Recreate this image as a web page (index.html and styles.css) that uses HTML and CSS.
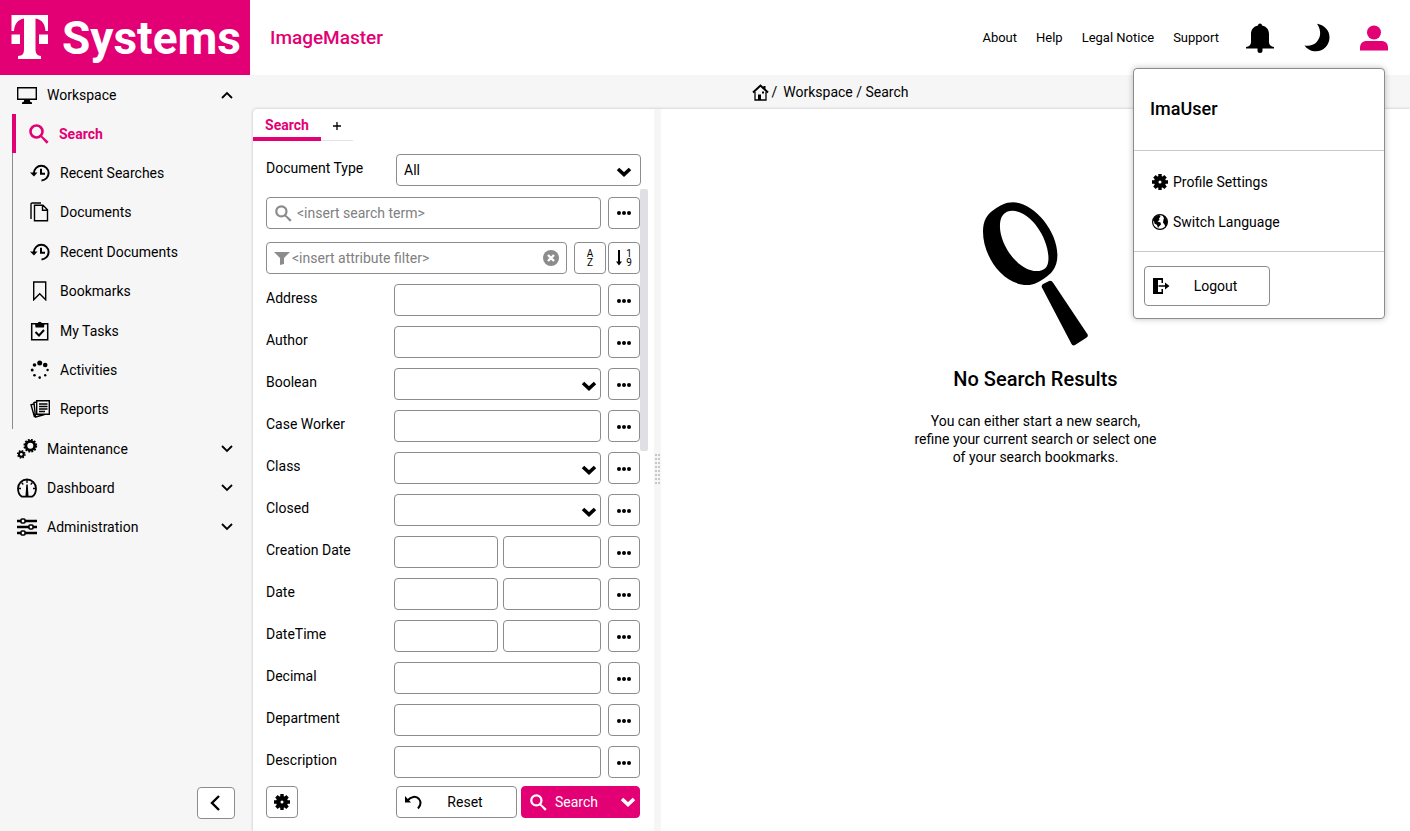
FILE: index.html
```html
<!DOCTYPE html>
<html lang="en">
<head>
    <meta charset="UTF-8">
    <meta name="viewport" content="width=device-width, initial-scale=1.0">
    <title>ImageMaster</title>
    <link rel="stylesheet" href="styles.css">
</head>
<body>
    <!-- shared icons -->
    <svg class="sprite" aria-hidden="true">
        <symbol id="i-search" viewBox="0 0 20 20"><circle cx="7.5" cy="7.5" r="6" fill="none" stroke="currentColor" stroke-width="2.6"/><path d="M11.5 11.5l1.5.2 6.6 6-2 2-6-6.600z" fill="currentColor"/></symbol>
        <symbol id="i-history" viewBox="0 0 20 18"><path d="M4 9a7.300 7.300 0 1 1 7.500 7.400" fill="none" stroke="currentColor" stroke-width="2"/><path d="M0 8.500h7.500L4 12.500zM10 4.800h2v4h3v2h-5z" fill="currentColor"/></symbol>
        <symbol id="i-dots" viewBox="0 0 14 4"><circle cx="2" cy="2" r="2"/><circle cx="7" cy="2" r="2"/><circle cx="12" cy="2" r="2"/></symbol>
        <symbol id="i-down" viewBox="0 0 16 10"><path d="M2 2l6 5.500L14 2" fill="none" stroke="currentColor" stroke-width="3.600"/></symbol>
        <symbol id="i-caret" viewBox="0 0 12 8"><path d="M1 1l5 5 5-5" fill="none" stroke="currentColor" stroke-width="1.800"/></symbol>
        <symbol id="i-gear" viewBox="0 0 16 16"><path d="M6.300 0h3.400v2.200l1 .4 1.600-1.500 2.500 2.500-1.500 1.600.4 1H16v3.600h-2.300l-.4 1 1.500 1.600-2.500 2.500-1.600-1.500-1 .4V16H6.300v-2.200l-1-.4-1.600 1.500-2.500-2.500 1.500-1.600-.4-1H0V6.200h2.300l.4-1-1.500-1.600 2.500-2.500 1.600 1.500 1-.4zM8 6.500a1.500 1.500 0 1 0 0 3 1.500 1.500 0 0 0 0-3z" fill-rule="evenodd"/></symbol>
    </svg>

    <header class="topbar">
        <div class="logo">
            <svg width="38" height="45" viewBox="11 16 38 45"><path d="M11.500 16H48v16h-2.500C45 25 42 20.500 35.500 19.500V50c0 5 2 6.500 5.500 7v3H18v-3c4.500-.5 6-2 6-7V19.500C18 20.500 14.500 25 14 32h-2.500zM11.500 35.500H20V45h-8.500zM39 35.500h9V45h-9z" fill="#fff"/></svg>
            <span>Systems</span>
        </div>
        <div class="product">ImageMaster</div>
        <nav class="top-links">
            <a href="#">About</a>
            <a href="#">Help</a>
            <a href="#">Legal Notice</a>
            <a href="#">Support</a>
        </nav>
        <div class="top-icons">
            <button aria-label="Notifications"><svg width="28" height="30" viewBox="0 0 28 30"><path d="M12 2.500a2 2 0 0 1 4 0c4.500 1 7 4 7 8.500v8c0 3 2 4.500 5 5v1.500H16.500V27.500a2.500 2.500 0 0 1-5 0v-2H0V24c3-.5 5-2 5-5v-8c0-4.500 2.500-7.500 7-8.500z"/></svg></button>
            <button aria-label="Dark mode"><svg width="28" height="30" viewBox="0 0 28 30"><path d="M14 .8c8 1.500 12.500 7 12.500 13.500 0 8-6 14-13.500 14C8 28.300 4 26 1.500 22.500c4.500 1 9-.2 12.200-3.500 4.300-4.600 4.900-11.500.3-18.200z"/></svg></button>
            <button class="active" aria-label="User"><svg width="28" height="26" viewBox="0 0 28 26"><circle cx="14" cy="7.500" r="7"/><path d="M0 25.500V23c0-4.500 2.500-7 7-7h14c4.500 0 7 2.500 7 7v2.500z"/></svg></button>
        </div>
    </header>

    <div class="user-menu">
        <h2>ImaUser</h2>
        <ul>
            <li><a href="#"><svg width="16" height="16"><use href="#i-gear"/></svg>Profile Settings</a></li>
            <li><a href="#"><svg width="16" height="16" viewBox="0 0 16 16"><circle cx="8" cy="8" r="7.400" fill="none" stroke="currentColor" stroke-width="1.200"/><path d="M.8 6.500L3 3l4-2.200L8.500 2.500 7 4.500 7.500 6 5.500 7.500l3 1 .5 2L7 12.500 6 14 5 11 2.500 9.500 2 7zM10.500 1l2.500 2 2.300 4-.2 3-1.600 3-1-2.500-1.500-2 .5-3L12 4.500z"/></svg>Switch Language</a></li>
        </ul>
        <div class="menu-foot">
            <button class="btn logout"><svg width="17" height="16" viewBox="0 0 17 16"><path d="M0 0h10v5H8.500V2H5v12h3.500v-3H10v5H0zM5.500 7.200H12V4.500l4.500 3.500L12 11.500V8.800H5.500z"/></svg><span>Logout</span></button>
        </div>
    </div>

    <div class="page">
        <aside class="sidebar">
            <nav>
                <a class="group" href="#"><svg width="22" height="18" viewBox="0 0 22 18"><path d="M1.700 1.700h18.600v11.600H1.700z" fill="none" stroke="currentColor" stroke-width="1.400"/><path d="M8 14h6v1.500l2 1V18H6v-1.500l2-1z"/></svg>Workspace<svg class="arrow up" width="12" height="8"><use href="#i-caret"/></svg></a>
                <ul>
                    <li class="current"><a href="#"><svg width="20" height="20"><use href="#i-search"/></svg>Search</a></li>
                    <li><a href="#"><svg width="20" height="18"><use href="#i-history"/></svg>Recent Searches</a></li>
                    <li><a href="#"><svg width="20" height="20" viewBox="0 0 20 20"><path d="M1 17V1.800L2 1h9M4.500 3.200H13l4.500 4.500v11.100h-13zM12.500 3.500v4.700h5" fill="none" stroke="currentColor" stroke-width="1.400"/></svg>Documents</a></li>
                    <li><a href="#"><svg width="20" height="18"><use href="#i-history"/></svg>Recent Documents</a></li>
                    <li><a href="#"><svg width="20" height="20" viewBox="0 0 20 20"><path d="M3.700 1h12v17.800l-6-6-6 6z" fill="none" stroke="currentColor" stroke-width="1.400"/></svg>Bookmarks</a></li>
                    <li><a href="#"><svg width="20" height="20" viewBox="0 0 20 20"><path d="M1.700 2.700h16v16h-16z" fill="none" stroke="currentColor" stroke-width="1.500"/><path d="M5 2.500h2.500a2.300 2.300 0 0 1 4.500 0h2.500L14 6.500H5.500z"/><path d="M5.500 11l3.500 3.500L14 9" fill="none" stroke="currentColor" stroke-width="2"/></svg>My Tasks</a></li>
                    <li><a href="#"><svg width="20" height="20" viewBox="0 0 20 20"><circle cx="9.700" cy="3" r="2.500"/><circle cx="15.200" cy="5" r="2.300"/><circle cx="4.500" cy="5" r="1.800"/><circle cx="2.200" cy="10" r="1.500"/><circle cx="17.600" cy="10" r="1.200"/><circle cx="4.500" cy="15.300" r="1.300"/><circle cx="15.200" cy="15.300" r="1.200"/><circle cx="9.700" cy="17.600" r="1.300"/></svg>Activities</a></li>
                    <li><a href="#"><svg width="20" height="20" viewBox="0 0 20 20"><path d="M6.700 1.700h12.600v13.600H6.700zM6.500 3L4 3.500 5.500 18l9-2.500M4 5L1 5.800 4.500 18" fill="none" stroke="currentColor" stroke-width="1.400"/><path d="M9 5h8.500M9 7.500h8.500M9 10h8.500M9 12.500h6" stroke="currentColor" stroke-width="1.300"/></svg>Reports</a></li>
                </ul>
                <a class="group" href="#"><svg width="22" height="20" viewBox="0 0 22 20"><circle cx="14.300" cy="6.700" r="4.400" fill="none" stroke="currentColor" stroke-width="2.800"/><circle cx="14.300" cy="6.700" r="6" fill="none" stroke="currentColor" stroke-width="1.800" stroke-dasharray="1.800 1.340"/><circle cx="5.300" cy="15.300" r="2.400" fill="none" stroke="currentColor" stroke-width="2"/><circle cx="5.300" cy="15.300" r="3.700" fill="none" stroke="currentColor" stroke-width="1.400" stroke-dasharray="1.500 1.400"/></svg>Maintenance<svg class="arrow" width="12" height="8"><use href="#i-caret"/></svg></a>
                <a class="group" href="#"><svg width="22" height="20" viewBox="0 0 22 20"><path d="M6 18.700C3 17 2 14 2 10.500a9 9 0 0 1 18 0c0 3.500-1 6.500-4 8.200z" fill="none" stroke="currentColor" stroke-width="1.800"/><path d="M11 2v3M5.500 4.500l1.800 2M16.500 4.500l-1.800 2M2.500 10.500H5M17 10.500h2.500" stroke="currentColor" stroke-width="1.300"/><path d="M10.300 6.500h1.400l.8 11.500h-3z"/></svg>Dashboard<svg class="arrow" width="12" height="8"><use href="#i-caret"/></svg></a>
                <a class="group" href="#"><svg width="22" height="18" viewBox="0 0 22 18"><path d="M1 3h20M1 9h20M1 15h20" stroke="currentColor" stroke-width="2.400"/><g fill="#fff" stroke="currentColor" stroke-width="1.600"><rect x="5" y="1" width="4" height="4" rx="1"/><rect x="13" y="7" width="4" height="4" rx="1"/><rect x="5" y="13" width="4" height="4" rx="1"/></g></svg>Administration<svg class="arrow" width="12" height="8"><use href="#i-caret"/></svg></a>
            </nav>
            <button class="btn collapse" aria-label="Collapse sidebar"><svg width="12" height="18" viewBox="0 0 12 18"><path d="M9 2L2 9l7 7" fill="none" stroke="currentColor" stroke-width="2.400"/></svg></button>
        </aside>

        <main>
            <div class="breadcrumb">
                <svg width="17" height="17" viewBox="0 0 17 17"><path d="M1 8.500l7.500-7 7.500 7M12.500 2v3" fill="none" stroke="currentColor" stroke-width="2"/><path d="M3 8v8h11V8" fill="none" stroke="currentColor" stroke-width="1.300"/><path d="M6 10.500h3V16H6zM10 7.500h2v2h-2z"/></svg>
                <span>/</span>
                <a href="#">Workspace / Search</a>
            </div>
            <div class="content">
                <section class="search-panel">
                    <div class="tabs">
                        <button class="tab selected">Search</button>
                        <button class="tab add" aria-label="New tab"><svg width="8" height="8" viewBox="0 0 8 8"><path d="M4 0v8M0 4h8" stroke="currentColor" stroke-width="1.300"/></svg></button>
                    </div>
                    <form>
                        <div class="doc-type">
                            <label for="docType">Document Type</label>
                            <div class="select"><select id="docType"><option>All</option></select><svg width="16" height="10"><use href="#i-down"/></svg></div>
                        </div>
                        <div class="scroll-area">
                            <div class="tool-row">
                                <div class="box search-box"><svg width="17" height="17"><use href="#i-search"/></svg><input type="text" placeholder="&lt;insert search term&gt;" aria-label="Search term"></div>
                                <button type="button" class="btn square" aria-label="More"><svg width="14" height="4"><use href="#i-dots"/></svg></button>
                            </div>
                            <div class="tool-row filter-row">
                                <div class="box filter-box"><svg width="16" height="13" viewBox="0 0 16 13"><path d="M0 0h16l-6 6v6l-4 1V6z"/></svg><input type="text" placeholder="&lt;insert attribute filter&gt;" aria-label="Attribute filter"><button type="button" aria-label="Clear"><svg width="16" height="16" viewBox="0 0 16 16"><circle cx="8" cy="8" r="8"/><path d="M5 5l6 6M11 5l-6 6" stroke="#fff" stroke-width="2.400"/></svg></button></div>
                                <div class="sorts">
                                    <button type="button" class="btn square sort" aria-label="Sort by name"><span>A<br>Z</span></button>
                                    <button type="button" class="btn square sort" aria-label="Sort by number"><svg width="6" height="16" viewBox="0 0 6 16"><path d="M2 0h2v11.500h2l-3 4-3-4h2z"/></svg><span>1<br>9</span></button>
                                </div>
                            </div>
                            <div class="fields" id="fields"></div>
                            <div class="thumb"></div>
                        </div>
                        <div class="actions">
                            <button type="button" class="btn square" aria-label="Search settings"><svg width="16" height="16"><use href="#i-gear"/></svg></button>
                            <button type="reset" class="btn reset"><svg width="17" height="15" viewBox="0 0 17 15"><path d="M0 1v6.500h6z"/><path d="M2.500 5.500C6 1.500 11 .5 14 4c2 2.500 2 6-1 9.500" fill="none" stroke="currentColor" stroke-width="2"/></svg><span>Reset</span></button>
                            <button type="submit" class="btn submit"><svg width="17" height="17"><use href="#i-search"/></svg><span>Search</span><svg width="16" height="10"><use href="#i-down"/></svg></button>
                        </div>
                    </form>
                </section>
                <div class="splitter"><div class="grip"></div></div>
                <section class="results">
                    <svg width="105" height="144" viewBox="249 36 316 432"><path d="M340 36C400 36 473 120 473 195C473 235 452 254 432 266C415 277 402 285 382 285C310 285 249 200 249 125C249 90 262 72 283 58C300 46 315 36 340 36ZM338 62C312 62 300 80 300 108C300 165 355 243 410 243C435 243 446 230 446 205C446 140 390 62 338 62Z" fill-rule="evenodd"/><path d="M430 282L448 273Q456 271 460 278L564 434Q566 440 560 444L526 466Q518 469 515 462L426 292Q424 286 430 282Z"/></svg>
                    <h1>No Search Results</h1>
                    <p>You can either start a new search,<br>refine your current search or select one<br>of your search bookmarks.</p>
                </section>
            </div>
        </main>
    </div>
    <script src="fields.js"></script>
</body>
</html>
```
FILE: styles.css
```css
:root {
    --magenta: #e20074;
    --grey: #f6f6f6;
    --line: #8c8c8c;
    --row: 39px;
}
* {
    box-sizing: border-box;
}
body {
    margin: 0;
    height: 100vh;
    display: flex;
    flex-direction: column;
    position: relative;
    font-family: Roboto, sans-serif;
    font-size: 14px;
    line-height: 18px;
    color: #000;
    background-color: white;
}
button, input, select {
    font: inherit;
    color: inherit;
}
button {
    padding: 0;
    border: none;
    background: none;
    cursor: pointer;
}
a {
    color: inherit;
    text-decoration: none;
}
ul {
    list-style: none;
    margin: 0;
    padding: 0;
}
svg {
    fill: currentColor;
    flex: none;
}
.sprite {
    display: none;
}

/* Header */
.topbar {
    display: flex;
    align-items: center;
    flex: 0 0 75px;
    padding-right: 22px;
}
.logo {
    display: flex;
    align-items: center;
    gap: 13px;
    width: 250px;
    height: 75px;
    padding-left: 11px;
    background-color: var(--magenta);
    color: white;
    font-size: 46px;
    font-weight: bold;
    line-height: 76px;
}
.product {
    margin-left: 20px;
    color: var(--magenta);
    font-size: 19px;
    font-weight: 500;
    line-height: 20px;
}
.top-links {
    display: flex;
    gap: 19px;
    margin-left: auto;
    font-size: 13px;
    line-height: 19px;
}
.top-icons {
    display: flex;
    align-items: center;
    gap: 29px;
    margin-left: 27px;
}
.top-icons button {
    display: flex;
}
.top-icons .active {
    color: var(--magenta);
}

/* User menu */
.user-menu {
    position: absolute;
    top: 68px;
    right: 25px;
    width: 252px;
    z-index: 2;
    border: 1px solid var(--line);
    border-radius: 4px;
    background-color: white;
    box-shadow: 0 0 6px rgba(0, 0, 0, 0.25);
}
.user-menu h2 {
    margin: 0;
    padding: 0 16px 2px;
    font-size: 18px;
    font-weight: 500;
    line-height: 79px;
}
.user-menu ul {
    padding: 11px 18px 9px;
    border-top: 1px solid #c8c8c8;
    border-bottom: 1px solid #c8c8c8;
}
.user-menu li a {
    display: flex;
    align-items: center;
    gap: 5px;
    height: 40px;
}
.menu-foot {
    padding: 14px 10px 12px;
}

/* Buttons */
.btn {
    display: flex;
    align-items: center;
    justify-content: center;
    height: 32px;
    border: 1px solid var(--line);
    border-radius: 4px;
    background-color: white;
}
.btn span {
    flex: 1;
    text-align: center;
}
.square {
    width: 32px;
    flex: none;
}
.logout {
    width: 126px;
    height: 40px;
    padding: 0 8px;
}

/* Sidebar */
.page {
    display: flex;
    flex: 1;
    min-height: 0;
    background-color: var(--grey);
}
.sidebar {
    display: flex;
    flex-direction: column;
    justify-content: space-between;
    width: 250px;
}
.group {
    display: flex;
    align-items: center;
    gap: 9px;
    height: var(--row);
    padding: 0 17px 0 16px;
}
.arrow {
    margin-left: auto;
}
.up {
    transform: rotate(180deg);
}
.sidebar ul {
    display: grid;
    grid-auto-rows: 1fr;
    height: 315px;
    margin-left: 12px;
    border-left: 1px solid var(--line);
}
.sidebar li a {
    display: flex;
    align-items: center;
    gap: 10px;
    height: 100%;
    padding-left: 17px;
}
.sidebar .current {
    margin-left: -1px;
    border-left: 4px solid var(--magenta);
    color: var(--magenta);
    font-weight: bold;
}
.sidebar .current a {
    padding-left: 13px;
}
.collapse {
    width: 38px;
    margin: 0 15px 12px auto;
}

/* Main area */
main {
    flex: 1;
    min-width: 0;
    display: flex;
    flex-direction: column;
}
.breadcrumb {
    display: flex;
    align-items: center;
    justify-content: center;
    gap: 3px;
    height: 34px;
}
.breadcrumb a {
    margin-left: 3px;
}
.content {
    flex: 1;
    min-height: 0;
    display: flex;
    margin-left: 3px;
    border-radius: 4px 0 0 0;
    background-color: white;
    box-shadow: 0 0 3px rgba(0, 0, 40, 0.25);
}
.search-panel {
    flex: 0 0 401px;
    display: flex;
    flex-direction: column;
}
.tabs {
    display: flex;
    height: 32px;
}
.tab {
    width: 68px;
}
.tab.selected {
    padding-top: 4px;
    border-bottom: 4px solid var(--magenta);
    color: var(--magenta);
    font-weight: bold;
}
.tab.add {
    width: 32px;
    border-bottom: 1px solid #e4e4e4;
}
form {
    flex: 1;
    min-height: 0;
    display: flex;
    flex-direction: column;
    padding: 13px 13px 13px;
}
.doc-type {
    display: grid;
    grid-template-columns: 130px 1fr;
}
label {
    line-height: 28px;
}
.select {
    position: relative;
}
.select svg {
    position: absolute;
    right: 9px;
    top: 13px;
    pointer-events: none;
}
.fields .select svg {
    right: 4px;
}
input, select {
    width: 100%;
    min-width: 0;
    height: 32px;
    padding: 0 7px;
    border: 1px solid var(--line);
    border-radius: 4px;
    background-color: white;
    appearance: none;
    outline: none;
}
.scroll-area {
    flex: 1;
    min-height: 0;
    position: relative;
    overflow: hidden;
    margin: 3px -8px 0 0;
    padding: 8px 9px 0 0;
}
.thumb {
    position: absolute;
    top: 0;
    right: 1px;
    width: 8px;
    height: 262px;
    border-radius: 2px;
    background-color: #dfdfe5;
}
.tool-row {
    display: flex;
    gap: 7px;
    margin-bottom: 13px;
}
.filter-row {
    margin-bottom: 10px;
}
.sorts {
    display: flex;
    gap: 2px;
}
.sort span {
    flex: none;
    font-size: 10px;
    line-height: 9px;
}
.sort svg {
    margin-right: 4px;
}
.box {
    flex: 1;
    display: flex;
    align-items: center;
    height: 32px;
    border: 1px solid var(--line);
    border-radius: 4px;
    color: var(--line);
}
.box input {
    flex: 1;
    height: 28px;
    padding: 0;
    border: none;
}
.box button {
    display: flex;
}
.box ::placeholder {
    color: #808080;
    opacity: 1;
}
.search-box {
    gap: 5px;
    padding: 0 8px;
}
.filter-box {
    gap: 2px;
    padding: 0 7px;
}
.fields {
    display: grid;
    gap: 10px;
}
.field {
    display: grid;
    grid-template-columns: 128px 1fr 32px;
}
.field .btn {
    padding-top: 2px;
}
.value {
    margin-right: 7px;
}
.range {
    display: grid;
    grid-template-columns: 104px 1fr;
    gap: 5px;
}
.actions {
    display: flex;
    gap: 4px;
    padding-right: 1px;
    margin-top: 8px;
}
.reset {
    width: 121px;
    margin-left: auto;
    padding: 0 8px;
}
.submit {
    width: 119px;
    padding: 0 3px 0 8px;
    border-color: var(--magenta);
    background-color: var(--magenta);
    color: white;
}
.submit span {
    padding-left: 8px;
    text-align: left;
}
.splitter {
    flex: 0 0 7px;
    display: flex;
    align-items: center;
    background-color: var(--grey);
}
.grip {
    width: 6px;
    height: 32px;
    margin-left: 1px;
    background: conic-gradient(from 270deg at 2px 2px, #c8c8c8 90deg, transparent 0) 0 0 / 3px 4px;
}

/* Results */
.results {
    flex: 1;
    display: flex;
    flex-direction: column;
    align-items: center;
    padding-top: 93px;
    text-align: center;
}
.results h1 {
    margin: 21px 0;
    font-size: 20px;
    font-weight: 500;
    line-height: 24px;
}
.results p {
    margin: 0;
}
```
FILE: fields.js
```js
const fields = [
    ['Address', 'text'],
    ['Author', 'text'],
    ['Boolean', 'select'],
    ['Case Worker', 'text'],
    ['Class', 'select'],
    ['Closed', 'select'],
    ['Creation Date', 'range'],
    ['Date', 'range'],
    ['DateTime', 'range'],
    ['Decimal', 'text'],
    ['Department', 'text'],
    ['Description', 'text']
];

function control(id, name, type) {
    if (type === 'select') {
        return `<div class="value select"><select id="${id}"><option></option></select><svg width="16" height="10"><use href="#i-down"/></svg></div>`;
    }
    if (type === 'range') {
        return `<div class="value range"><input type="text" id="${id}"><input type="text" aria-label="${name} to"></div>`;
    }
    return `<div class="value"><input type="text" id="${id}"></div>`;
}

document.getElementById('fields').innerHTML = fields.map(([name, type], i) => `
    <div class="field">
        <label for="field${i}">${name}</label>
        ${control('field' + i, name, type)}
        <button type="button" class="btn square" aria-label="More"><svg width="14" height="4"><use href="#i-dots"/></svg></button>
    </div>`).join('');
```
